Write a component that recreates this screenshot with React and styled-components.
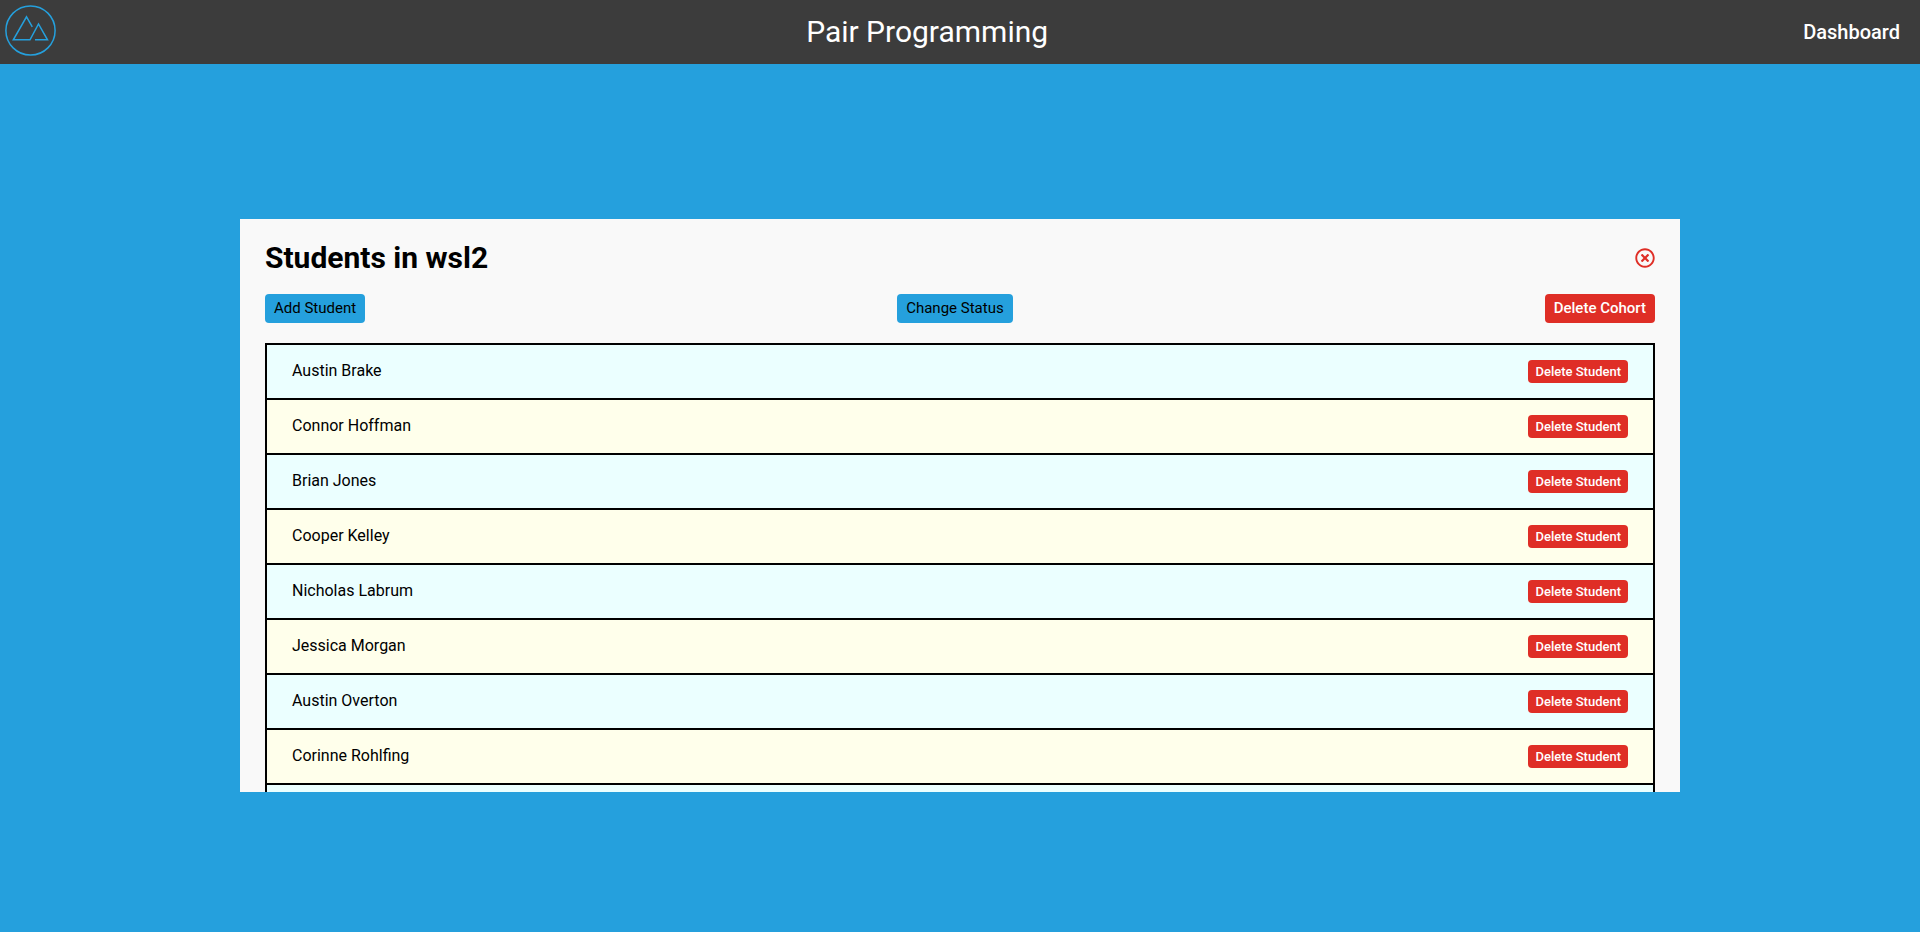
import React, { useState } from 'react';
import styled, { createGlobalStyle } from 'styled-components';
import { FaRegTimesCircle } from 'react-icons/fa';

const GlobalStyle = createGlobalStyle`
  * {
    box-sizing: border-box;
  }
  body {
    margin: 0;
    font-family: Roboto, 'Liberation Sans', sans-serif;
    background-color: #25a0dd;
  }
`;

const Page = styled.div`
  height: 100vh;
  display: flex;
  flex-direction: column;
`;

const Header = styled.header`
  height: 64px;
  flex-shrink: 0;
  padding: 0 20px 0 5px;
  display: flex;
  justify-content: space-between;
  align-items: center;
  background-color: #3c3c3c;
  color: white;
`;

const LogoLink = styled.a`
  display: flex;
  padding-bottom: 3px;
`;

const SiteTitle = styled.div`
  font-size: 30px;
  line-height: 36px;
`;

const NavLink = styled.a`
  padding-left: 5px;
  color: white;
  font-size: 20px;
  font-weight: 500;
  text-decoration: none;
`;

const Main = styled.main`
  flex: 1;
  min-height: 0;
  padding: 155px 0 140px;
  display: flex;
  justify-content: center;
`;

const Modal = styled.section`
  width: 75%;
  padding: 19px 25px;
  overflow-y: auto;
  scrollbar-width: none;
  background-color: #f9f9f9;
`;

const TitleRow = styled.div`
  display: flex;
  justify-content: space-between;
  align-items: center;
  margin-bottom: 16px;
`;

const Title = styled.h1`
  margin: 0;
  font-size: 30px;
  line-height: 40px;
`;

const CloseButton = styled.button`
  display: flex;
  padding: 0;
  border: none;
  background: none;
  color: #df2e26;
  font-size: 20px;
  cursor: pointer;
`;

const ButtonRow = styled.div`
  display: flex;
  justify-content: space-between;
  margin-bottom: 20px;
`;

const Button = styled.button`
  height: ${({ $small }) => ($small ? '23px' : '29px')};
  padding: ${({ $small }) => ($small ? '0 7px' : '0 9px 2px')};
  border: none;
  border-radius: 4px;
  background-color: ${({ $danger }) => ($danger ? '#df2e26' : '#25a0dd')};
  color: ${({ $danger }) => ($danger ? 'white' : 'black')};
  font-family: inherit;
  font-size: ${({ $small }) => ($small ? '13px' : '15px')};
  font-weight: ${({ $danger }) => ($danger ? 500 : 400)};
  cursor: pointer;
`;

const StudentList = styled.ul`
  margin: 0;
  padding: 0;
  list-style: none;
  border: 2px solid black;
  border-bottom: none;
`;

const Student = styled.li`
  height: 55px;
  padding: 0 25px;
  display: flex;
  justify-content: space-between;
  align-items: center;
  border-bottom: 2px solid black;
  background-color: #ebffff;
  &:nth-child(even) {
    background-color: #ffffeb;
  }
`;

const Name = styled.span`
  font-size: 16px;
  line-height: 20px;
  padding-bottom: 2px;
`;

const names = [
  'Austin Brake',
  'Connor Hoffman',
  'Brian Jones',
  'Cooper Kelley',
  'Nicholas Labrum',
  'Jessica Morgan',
  'Austin Overton',
  'Corinne Rohlfing',
];

function Logo() {
  return (
    <svg width='51' height='51' viewBox='0 0 51 51' fill='none' stroke='#25a0dd' strokeWidth='1.5'>
      <circle cx='25.5' cy='25.5' r='24.6' />
      <path d='M27.3 21.8 L21.5 11.8 L8.3 34.8 H25 L33.5 19 L42.5 34.8 H30' />
    </svg>
  );
}

function App() {
  const [students, setStudents] = useState(names);
  const [open, setOpen] = useState(true);

  const deleteStudent = name => {
    setStudents(students.filter(student => student !== name));
  };

  return (
    <Page>
      <GlobalStyle />
      <Header>
        <LogoLink href='#' aria-label='Home'>
          <Logo />
        </LogoLink>
        <SiteTitle>Pair Programming</SiteTitle>
        <NavLink href='#'>Dashboard</NavLink>
      </Header>
      <Main>
        {open && (
          <Modal>
            <TitleRow>
              <Title>Students in wsl2</Title>
              <CloseButton aria-label='Close' onClick={() => setOpen(false)}>
                <FaRegTimesCircle />
              </CloseButton>
            </TitleRow>
            <ButtonRow>
              <Button>Add Student</Button>
              <Button>Change Status</Button>
              <Button $danger>Delete Cohort</Button>
            </ButtonRow>
            <StudentList>
              {students.map(name => (
                <Student key={name}>
                  <Name>{name}</Name>
                  <Button $danger $small onClick={() => deleteStudent(name)}>
                    Delete Student
                  </Button>
                </Student>
              ))}
              {/* empty row at the end of the list */}
              <Student />
            </StudentList>
          </Modal>
        )}
      </Main>
    </Page>
  );
}

export default App;
